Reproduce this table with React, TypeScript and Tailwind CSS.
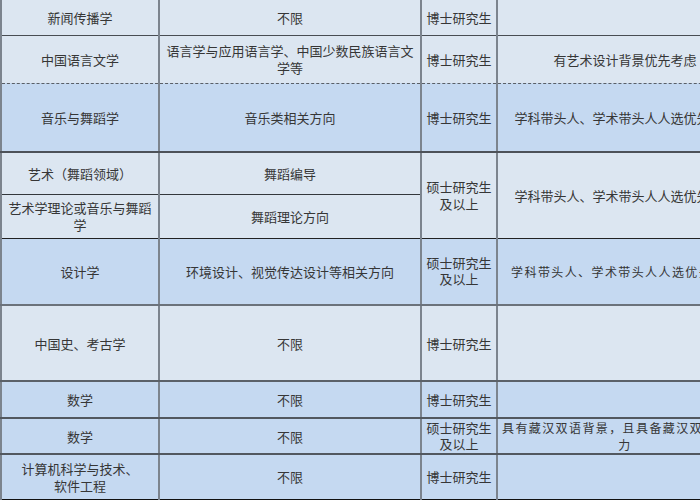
import * as React from "react";

const light = "bg-[#dce6f1]";
const blue = "bg-[#c5d9f1]";

type CellProps = {
  children?: React.ReactNode;
  className?: string;
  rowSpan?: number;
};

function Cell({ children, className = "", rowSpan }: CellProps) {
  return (
    <td
      rowSpan={rowSpan}
      className={`border-x-2 border-x-[#7c848e] px-1 text-center align-middle ${className}`}
    >
      {children}
    </td>
  );
}

// spaced, slightly smaller text used in a few of the last-column cells
function Spaced({ children }: { children: React.ReactNode }) {
  return <span className="text-[12px] tracking-[1.4px]">{children}</span>;
}

export default function App() {
  const lead = "学科带头人、学术带头人人选优先考虑";
  return (
    <div
      className="h-[500px] w-[700px] overflow-hidden bg-white text-[13px] leading-[17px] text-[#363636]"
      style={{ fontFamily: '"Noto Sans CJK SC", "Noto Sans", sans-serif' }}
    >
      <table className="w-[752px] table-fixed border-collapse">
        <colgroup>
          <col className="w-[158px]" />
          <col className="w-[262px]" />
          <col className="w-[76px]" />
          <col className="w-[256px]" />
        </colgroup>
        <tbody>
          <tr className={`h-[35px] ${light} [&>td]:border-b [&>td]:border-b-[#484d53]`}>
            <Cell>新闻传播学</Cell>
            <Cell>不限</Cell>
            <Cell>博士研究生</Cell>
            <Cell />
          </tr>
          <tr
            className={`h-[48px] ${light} [&>td]:border-b [&>td]:[border-bottom-style:dashed] [&>td]:border-b-[#5a5f66]`}
          >
            <Cell>中国语言文学</Cell>
            <Cell>语言学与应用语言学、中国少数民族语言文学等</Cell>
            <Cell>博士研究生</Cell>
            <Cell>有艺术设计背景优先考虑</Cell>
          </tr>
          <tr className={`h-[69px] ${blue} [&>td]:border-b-2 [&>td]:border-b-[#4d5259]`}>
            <Cell>音乐与舞蹈学</Cell>
            <Cell>音乐类相关方向</Cell>
            <Cell>博士研究生</Cell>
            <Cell>{lead}</Cell>
          </tr>
          <tr className={`h-[42px] ${light}`}>
            <Cell className="border-b border-b-[#33373c]">艺术（舞蹈领域）</Cell>
            <Cell className="border-b border-b-[#33373c]">舞蹈编导</Cell>
            <Cell rowSpan={2} className="border-b border-b-[#222]">
              硕士研究生及以上
            </Cell>
            <Cell rowSpan={2} className="border-b border-b-[#222]">
              {lead}
            </Cell>
          </tr>
          <tr className={`h-[44px] ${light} [&>td]:border-b [&>td]:border-b-[#222]`}>
            <Cell>艺术学理论或音乐与舞蹈学</Cell>
            <Cell>舞蹈理论方向</Cell>
          </tr>
          <tr className={`h-[67px] ${blue} [&>td]:border-b-2 [&>td]:border-b-[#6b727b]`}>
            <Cell>设计学</Cell>
            <Cell>环境设计、视觉传达设计等相关方向</Cell>
            <Cell className="leading-[16px]">硕士研究生及以上</Cell>
            <Cell>
              <Spaced>{lead}</Spaced>
            </Cell>
          </tr>
          <tr className={`h-[76px] ${light} [&>td]:border-b-2 [&>td]:border-b-[#5b6169]`}>
            <Cell>中国史、考古学</Cell>
            <Cell>不限</Cell>
            <Cell>博士研究生</Cell>
            <Cell />
          </tr>
          <tr className={`h-[37px] ${blue} [&>td]:border-b-2 [&>td]:border-b-[#52585f]`}>
            <Cell>数学</Cell>
            <Cell>不限</Cell>
            <Cell>博士研究生</Cell>
            <Cell />
          </tr>
          <tr className={`h-[35px] ${blue} [&>td]:border-b-2 [&>td]:border-b-[#52585f]`}>
            <Cell>数学</Cell>
            <Cell>不限</Cell>
            <Cell className="leading-[16px]">硕士研究生及以上</Cell>
            <Cell>
              <Spaced>
                <span className="whitespace-nowrap">具有藏汉双语背景，且具备藏汉双语沟通能</span>
                <br />力
              </Spaced>
            </Cell>
          </tr>
          <tr className={`h-[45px] ${blue} [&>td]:border-b [&>td]:border-b-[#111]`}>
            <Cell>
              计算机科学与技术、
              <br />
              软件工程
            </Cell>
            <Cell>不限</Cell>
            <Cell>博士研究生</Cell>
            <Cell />
          </tr>
        </tbody>
      </table>
    </div>
  );
}
